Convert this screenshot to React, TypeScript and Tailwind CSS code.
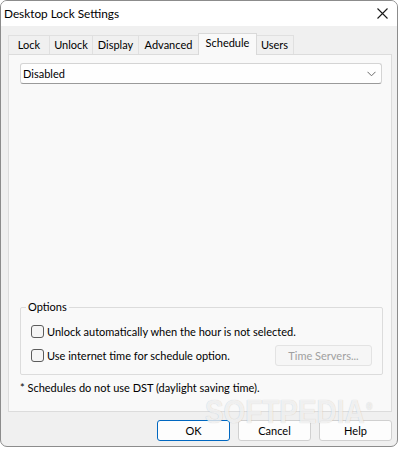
const font = "[font-family:'Lato','Segoe_UI',sans-serif]";

type TabProps = { label: string; width: string; active?: boolean };

function Tab({ label, width, active }: TabProps) {
  if (active) {
    return (
      <div
        className={`relative z-10 -mb-px -mx-px flex h-[22px] items-start justify-center border border-b-0 border-[#d9d9d9] bg-[#f9f9f9] pt-[1px] ${width}`}
      >
        {label}
      </div>
    );
  }
  return (
    <div
      className={`flex h-[19px] items-center justify-center border border-b-0 border-l-0 border-[#e0e0e0] bg-[#f0f0f0] first:border-l ${width}`}
    >
      {label}
    </div>
  );
}

function Checkbox() {
  return <span className="h-[13px] w-[13px] shrink-0 rounded-[3px] border border-[#5c5c5c] bg-[#f5f5f5]" />;
}

function DialogButton({ label, primary }: { label: string; primary?: boolean }) {
  return (
    <button
      type="button"
      className={`flex h-[21px] w-[73px] items-center justify-center rounded-[3px] border bg-[#fdfdfd] ${
        primary ? "border-[#0067c0]" : "border-[#d0d0d0]"
      }`}
    >
      {label}
    </button>
  );
}

export default function App() {
  return (
    <div className={`h-[450px] w-[400px] bg-white text-[11px] leading-[16px] text-black ${font}`}>
      <div className="relative flex h-[447px] w-[398px] flex-col overflow-hidden rounded-[7px] border border-[#8c8c8c] bg-[#f0f0f0]">
        {/* title bar */}
        <div className="flex h-[25px] shrink-0 items-center justify-between bg-white pl-[3px] pr-[8px]">
          <span className="text-[11.8px]">Desktop Lock Settings</span>
          <svg width="11" height="11" viewBox="0 0 11 11" className="mr-[1px]">
            <path d="M0.5 0.5 L10.5 10.5 M10.5 0.5 L0.5 10.5" stroke="#1a1a1a" strokeWidth="1.1" />
          </svg>
        </div>

        {/* body */}
        <div className="flex flex-1 flex-col pl-[7px] pr-[5px] pt-[7px]">
          <div className="flex h-[21px] items-end">
            <Tab label="Lock" width="w-[42px]" />
            <Tab label="Unlock" width="w-[43px]" />
            <Tab label="Display" width="w-[46px]" />
            <Tab label="Advanced" width="w-[60px]" />
            <Tab label="Schedule" width="w-[59px]" active />
            <Tab label="Users" width="w-[38px]" />
          </div>

          <div className="flex h-[358px] w-[384px] flex-col border border-[#dcdcdc] bg-[#f9f9f9] pb-[15px] pl-[11px] pt-[8px]">
            <div className="flex h-[21px] w-[362px] items-center justify-between rounded-[3px] border border-[#d4d4d4] border-b-[#9a9a9a] bg-[#fefefe] pl-[2px] pr-[5px]">
              <span>Disabled</span>
              <svg width="9" height="6" viewBox="0 0 9 6">
                <path d="M0.5 0.8 L4.5 4.8 L8.5 0.8" fill="none" stroke="#6a6a6a" strokeWidth="1" />
              </svg>
            </div>

            <div className="relative mt-auto flex h-[68px] w-[363px] flex-col gap-[3px] rounded-[2px] border border-[#dcdcdc] pb-[8px] pl-[10px] pr-[10px] pt-[13px]">
              <span className="absolute -top-[9px] left-[5px] bg-[#f9f9f9] px-[2px]">Options</span>
              <div className="flex h-[21px] items-center">
                <Checkbox />
                <span className="ml-[3px]">Unlock automatically when the hour is not selected.</span>
              </div>
              <div className="flex h-[21px] items-center justify-between">
                <div className="flex items-center">
                  <Checkbox />
                  <span className="ml-[3px]">Use internet time for schedule option.</span>
                </div>
                <div className="flex h-[21px] w-[97px] items-center justify-center rounded-[3px] border border-[#e3e3e3] bg-[#f6f6f6] text-[#a0a0a0]">
                  Time Servers...
                </div>
              </div>
            </div>

            <div className="mt-[5px] h-[16px]">* Schedules do not use DST (daylight saving time).</div>
          </div>

          <div className="mt-[8px] flex justify-end gap-[8px]">
            <DialogButton label="OK" primary />
            <DialogButton label="Cancel" />
            <DialogButton label="Help" />
          </div>
        </div>

        {/* watermark */}
        <span className="pointer-events-none absolute left-[204px] top-[401px] origin-left scale-x-[0.82] text-[34px] font-bold leading-[18px] text-white/75 [font-family:'Liberation_Sans',sans-serif] [text-shadow:0_0_1px_rgba(0,0,0,0.22)]">
          SOFTPEDIA
          <span className="ml-[2px] align-top text-[10px] leading-[10px]">®</span>
        </span>
      </div>
    </div>
  );
}
